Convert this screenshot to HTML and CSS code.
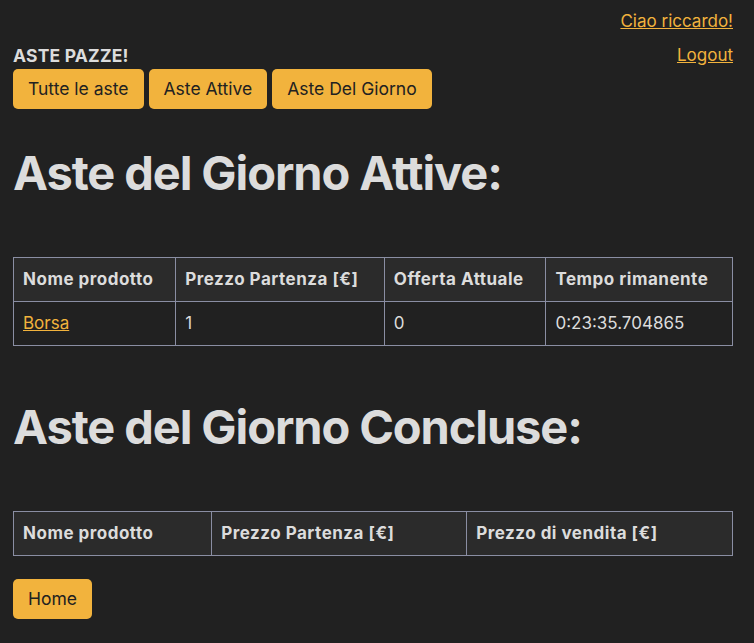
FILE: index.html
```html
<!DOCTYPE html>
<html lang="it">
<head>
<meta charset="utf-8">
<title>Aste del Giorno</title>
<link rel="stylesheet" href="styles.css">
</head>
<body>
<header class="top">
  <a class="link greet" href="#">Ciao riccardo!</a>
  <div class="bar">
    <div class="brand">
      <div class="title">ASTE PAZZE!</div>
      <nav class="nav">
        <button class="btn">Tutte le aste</button>
        <button class="btn">Aste Attive</button>
        <button class="btn">Aste Del Giorno</button>
      </nav>
    </div>
    <a class="link" href="#">Logout</a>
  </div>
</header>
<main>
  <h1 class="heading">Aste del Giorno Attive:</h1>
  <table class="tbl t1">
    <thead>
      <tr><th>Nome prodotto</th><th>Prezzo Partenza [€]</th><th>Offerta Attuale</th><th>Tempo rimanente</th></tr>
    </thead>
    <tbody>
      <tr><td><a class="link" href="#">Borsa</a></td><td>1</td><td>0</td><td>0:23:35.704865</td></tr>
    </tbody>
  </table>
  <h1 class="heading second">Aste del Giorno Concluse:</h1>
  <table class="tbl t2">
    <thead>
      <tr><th>Nome prodotto</th><th>Prezzo Partenza [€]</th><th>Prezzo di vendita [€]</th></tr>
    </thead>
  </table>
  <button class="btn home">Home</button>
</main>
</body>
</html>
```
FILE: styles.css
```css
html, body {
  background: #212121;
}
body {
  margin: 0;
  padding: 9px 21px 0 13px;
  color: #dcdcdc;
  font-family: Inter, "Noto Sans", sans-serif;
  font-size: 17px;
  line-height: 1.5;
}
.link {
  color: #f2b33d;
  text-decoration: underline;
}
.top {
  display: flex;
  flex-direction: column;
}
.greet {
  align-self: flex-end;
}
.bar {
  display: flex;
  justify-content: space-between;
  align-items: flex-start;
  margin-top: 8px;
}
.title {
  font-weight: 700;
  font-size: 17.5px;
  letter-spacing: 0.2px;
  line-height: 26px;
}
.nav {
  display: flex;
  gap: 5px;
}
.btn {
  background: #f2b33d;
  color: #212121;
  border: none;
  border-radius: 5px;
  font-family: Inter, "Noto Sans", sans-serif;
  font-size: 17.5px;
  line-height: 24px;
  padding: 8px 15px;
  margin: 0;
}
.heading {
  font-size: 47px;
  font-weight: 700;
  letter-spacing: -1.1px;
  line-height: 1.2;
  margin: 36px 0 56px;
}
.heading.second {
  margin-top: 53px;
}
.tbl {
  border-collapse: collapse;
  width: 100%;
}
.tbl th, .tbl td {
  border: 1px solid #8a8ea3;
  text-align: left;
  padding: 8px 9px;
  height: 27px;
}
.tbl th {
  background: #2b2b2b;
  font-weight: 700;
  letter-spacing: 0.5px;
}
.home {
  margin-top: 23px;
}
```
